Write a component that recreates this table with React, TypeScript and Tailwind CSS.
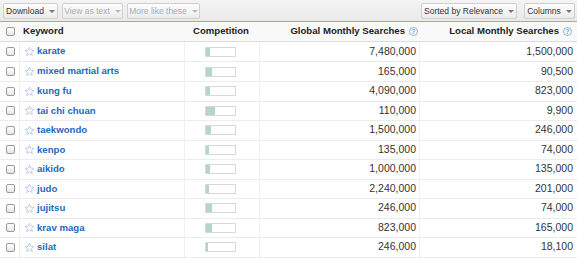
import React from "react";

const rows: { k: string; fill: number; g: string; l: string }[] = [
  { k: "karate", fill: 4, g: "7,480,000", l: "1,500,000" },
  { k: "mixed martial arts", fill: 6, g: "165,000", l: "90,500" },
  { k: "kung fu", fill: 4, g: "4,090,000", l: "823,000" },
  { k: "tai chi chuan", fill: 9, g: "110,000", l: "9,900" },
  { k: "taekwondo", fill: 5, g: "1,500,000", l: "246,000" },
  { k: "kenpo", fill: 3, g: "135,000", l: "74,000" },
  { k: "aikido", fill: 4, g: "1,000,000", l: "135,000" },
  { k: "judo", fill: 3, g: "2,240,000", l: "201,000" },
  { k: "jujitsu", fill: 6, g: "246,000", l: "74,000" },
  { k: "krav maga", fill: 6, g: "823,000", l: "165,000" },
  { k: "silat", fill: 2, g: "246,000", l: "18,100" },
];

function Caret({ disabled }: { disabled?: boolean }) {
  return (
    <svg width="6" height="4" viewBox="0 0 6 4" className="ml-[5px] mt-[1px]">
      <path d="M0 0 L6 0 L3 3 Z" fill={disabled ? "#bbb" : "#777"} />
    </svg>
  );
}

function Btn({ label, disabled, w }: { label: string; disabled?: boolean; w: string }) {
  return (
    <div
      className={`flex h-[16px] items-center justify-center rounded-[2px] border border-[#cfcfcf] bg-gradient-to-b from-[#fdfdfd] to-[#ececec] text-[8.5px] ${w} ${
        disabled ? "text-[#ababab]" : "text-[#333]"
      }`}
    >
      <span>{label}</span>
      <Caret disabled={disabled} />
    </div>
  );
}

function Checkbox() {
  return (
    <div className="h-[9px] w-[9px] rounded-[2px] border border-[#9a9a9a] bg-gradient-to-b from-white to-[#e6e6e6]" />
  );
}

function Star() {
  return (
    <svg width="11" height="11" viewBox="0 0 24 24">
      <path
        d="M12 2.5 L14.8 8.9 L21.7 9.5 L16.5 14 L18.1 20.8 L12 17.2 L5.9 20.8 L7.5 14 L2.3 9.5 L9.2 8.9 Z"
        fill="#fbfcfe"
        stroke="#a9bfdc"
        strokeWidth="1.6"
        strokeLinejoin="round"
      />
    </svg>
  );
}

function Help() {
  return (
    <span className="ml-[4px] inline-flex h-[9px] w-[9px] items-center justify-center rounded-full border border-[#8fb6dc] text-[7px] font-bold leading-none text-[#7ba6d2]">
      ?
    </span>
  );
}

export default function App() {
  return (
    <div
      className="w-[577px] h-[258px] overflow-hidden bg-white"
      style={{ fontFamily: '"Liberation Sans", Arial, sans-serif' }}
    >
      <div className="flex h-[21px] items-center justify-between bg-gradient-to-b from-[#f4f4f4] to-[#e9e9e9] pl-[3px] pr-[2px] pt-[1px]">
        <div className="flex gap-[4px]">
          <Btn label="Download" w="w-[55px]" />
          <Btn label="View as text" disabled w="w-[61px]" />
          <Btn label="More like these" disabled w="w-[73px]" />
        </div>
        <div className="flex gap-[7px]">
          <Btn label="Sorted by Relevance" w="w-[96px]" />
          <Btn label="Columns" w="w-[51px]" />
        </div>
      </div>
      <div className="h-[1px] bg-[#7fbf96]" />
      <div className="grid h-[20px] grid-cols-[20px_165px_75px_160px_157px] items-center border-b border-[#dcdcdc] bg-[#f9f9f9] text-[9.6px] font-bold text-[#222]">
        <div className="flex justify-center pl-[1px]">
          <Checkbox />
        </div>
        <div className="pl-[3px]">Keyword</div>
        <div className="pl-[8px]">Competition</div>
        <div className="flex items-center justify-end pr-[2px]">
          Global Monthly Searches
          <Help />
        </div>
        <div className="flex items-center justify-end pr-[5px]">
          Local Monthly Searches
          <Help />
        </div>
      </div>
      {rows.map((r, i) => (
        <div
          key={r.k}
          className={`grid grid-cols-[20px_165px_75px_160px_157px] items-center border-b border-[#ececec] ${
            i < 2 ? "h-[20px]" : "h-[19.5px]"
          }`}
        >
          <div className="flex h-full items-center justify-center border-r border-[#f0f0f0] pl-[1px]">
            <Checkbox />
          </div>
          <div className="flex h-full items-center border-r border-[#f0f0f0] pl-[4px] text-[9.6px] font-bold text-[#1f68bd]">
            <Star />
            <span className="ml-[2px]">{r.k}</span>
          </div>
          <div className="flex h-full items-center border-r border-[#f0f0f0] pl-[20px]">
            <div className="relative h-[10px] w-[31px] border border-[#d8d8d8] bg-white">
              <div className="h-full bg-[#b2d8c5]" style={{ width: r.fill }} />
            </div>
          </div>
          <div className="flex h-full items-center justify-end border-r border-[#f0f0f0] pr-[3px] text-[10.5px] text-[#333]">
            {r.g}
          </div>
          <div className="flex h-full items-center justify-end pr-[4px] text-[10.5px] text-[#333]">
            {r.l}
          </div>
        </div>
      ))}
    </div>
  );
}
